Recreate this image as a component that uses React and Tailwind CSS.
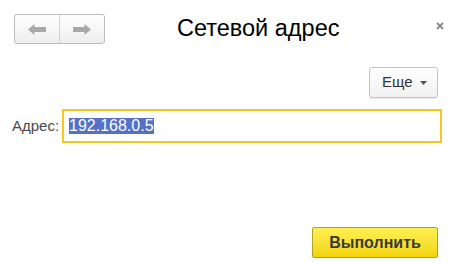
import React from "react";

const Arrow = ({ dir }) => (
  <svg width="18" height="11" viewBox="0 0 18 11">
    {dir === "left" ? (
      <path d="M0 5.5 L6.5 0 L6.5 3 L18 3 L18 8 L6.5 8 L6.5 11 Z" fill="#a8a8a8" />
    ) : (
      <path d="M18 5.5 L11.5 0 L11.5 3 L0 3 L0 8 L11.5 8 L11.5 11 Z" fill="#a8a8a8" />
    )}
  </svg>
);

const App = () => {
  return (
    <div
      className="w-[461px] h-[262px] bg-white flex flex-col overflow-hidden"
      style={{ fontFamily: '"Liberation Sans", Arial, sans-serif' }}
    >
      {/* header */}
      <div className="flex items-start pl-[14px] pr-[17px] pt-[14px]">
        <div className="flex w-[91px] h-[30px] border border-[#bcbcbc] rounded-[3px] bg-gradient-to-b from-white to-[#eeeeee] overflow-hidden">
          <button className="flex-1 flex items-center justify-center border-r border-[#d2d2d2]">
            <Arrow dir="left" />
          </button>
          <button className="flex-1 flex items-center justify-center">
            <Arrow dir="right" />
          </button>
        </div>
        <div className="ml-[72px] mt-[1px] text-[23.5px] leading-[27px] text-black">
          Сетевой адрес
        </div>
        <button className="ml-auto mt-[8px]">
          <svg width="8" height="8" viewBox="0 0 8 8">
            <path d="M1 1 L7 7 M7 1 L1 7" stroke="#8a8a8a" strokeWidth="1.8" />
          </svg>
        </button>
      </div>

      {/* more button */}
      <div className="flex justify-end pr-[23px] mt-[23px]">
        <button className="flex items-center h-[31px] w-[69px] pl-[12px] border border-[#c4c4c4] rounded-[3px] bg-gradient-to-b from-white to-[#f1f1f1] shadow-[0_1px_1px_rgba(0,0,0,0.08)] text-[15px] text-[#333]">
          Еще
          <svg className="ml-[7px]" width="7" height="4" viewBox="0 0 7 4">
            <path d="M0 0 L7 0 L3.5 4 Z" fill="#555" />
          </svg>
        </button>
      </div>

      {/* address row */}
      <div className="flex items-center pl-[12px] mt-[11px]">
        <span className="text-[15px] text-[#4a4a4a] w-[50px]">Адрес:</span>
        <div className="flex items-center w-[380px] h-[34px] border-2 border-[#f5c81e] pl-[5px]">
          <span className="bg-[#5570c6] text-white text-[16px] leading-[16px] h-[16px]">
            192.168.0.5
          </span>
        </div>
      </div>

      {/* footer */}
      <div className="flex justify-end pr-[23px] mt-auto mb-[4px]">
        <button className="h-[31px] w-[126px] border border-[#b3a02a] rounded-[2px] bg-gradient-to-b from-[#fff04f] to-[#f2d400] text-[16px] font-bold text-[#3a3a3a]">
          Выполнить
        </button>
      </div>
    </div>
  );
};

export default App;
